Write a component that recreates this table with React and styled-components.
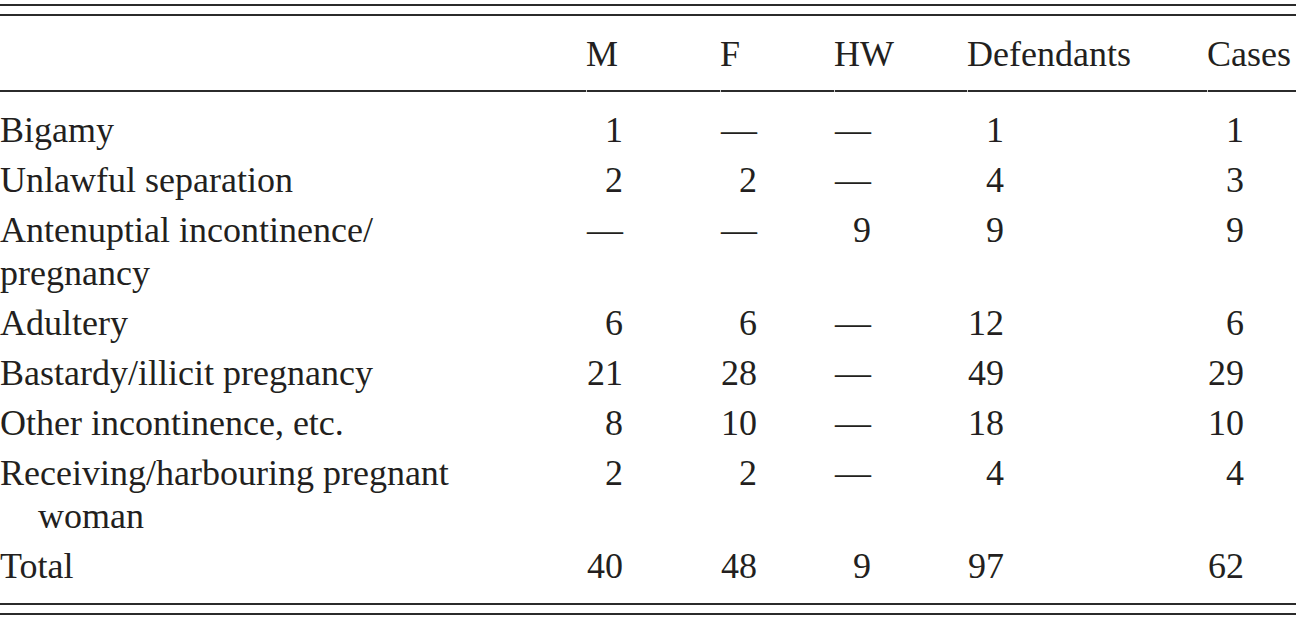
import styled, { createGlobalStyle } from 'styled-components';

const GlobalStyle = createGlobalStyle`
  html, body {
    margin: 0;
    padding: 0;
    background: #fff;
  }
  body {
    font-family: 'Liberation Serif', 'Times New Roman', serif;
    color: #231f20;
  }
`;

// column starts: label 0, M 586, F 720, HW 834, Defendants 967, Cases 1207
const COLS = '586px 134px 114px 133px 240px 89px';
const RULE = '#2b2b2b';

const Table = styled.div`
  width: 1296px;
  padding-top: 4px;
  font-size: 36px;
  line-height: 43px;
`;

const DoubleRule = styled.div`
  height: 8px;
  border-top: 2px solid ${RULE};
  border-bottom: 2px solid ${RULE};
`;

const HeaderRow = styled.div`
  display: grid;
  grid-template-columns: ${COLS};
`;

const HeadCell = styled.div`
  position: relative;
  padding: 17px 0 14px;
  border-bottom: 2px solid ${RULE};
  white-space: nowrap;

  &::after {
    content: '';
    display: ${({ $gap }) => ($gap ? 'block' : 'none')};
    position: absolute;
    left: 0;
    bottom: -2px;
    width: 1px;
    height: 2px;
    background: #cfcfcf;
  }
`;

const Body = styled.div`
  padding: 13px 0 12px;
`;

const Row = styled.div`
  display: grid;
  grid-template-columns: ${COLS};
  padding: 4px 0 3px;
`;

const Label = styled.div`
  white-space: nowrap;
`;

const LabelLine = styled.div`
  padding-left: ${({ $indent }) => ($indent ? '38px' : '0')};
`;

const Num = styled.div`
  width: 37px;
  text-align: right;
  white-space: nowrap;
`;

const headers = ['M', 'F', 'HW', 'Defendants', 'Cases'];

const rows = [
  { label: ['Bigamy'], values: ['1', '—', '—', '1', '1'] },
  { label: ['Unlawful separation'], values: ['2', '2', '—', '4', '3'] },
  { label: ['Antenuptial incontinence/', 'pregnancy'], values: ['—', '—', '9', '9', '9'] },
  { label: ['Adultery'], values: ['6', '6', '—', '12', '6'] },
  { label: ['Bastardy/illicit pregnancy'], values: ['21', '28', '—', '49', '29'] },
  { label: ['Other incontinence, etc.'], values: ['8', '10', '—', '18', '10'] },
  { label: ['Receiving/harbouring pregnant', 'woman'], indent: true, values: ['2', '2', '—', '4', '4'] },
  { label: ['Total'], values: ['40', '48', '9', '97', '62'] },
];

const App = () => (
  <>
    <GlobalStyle />
    <Table>
      <DoubleRule />
      <HeaderRow>
        <HeadCell />
        {headers.map((h) => (
          <HeadCell key={h} $gap>
            {h}
          </HeadCell>
        ))}
      </HeaderRow>
      <Body>
        {rows.map((row) => (
          <Row key={row.label[0]}>
            <Label>
              {row.label.map((line, i) => (
                <LabelLine key={line} $indent={row.indent && i > 0}>
                  {line}
                </LabelLine>
              ))}
            </Label>
            {row.values.map((v, i) => (
              <Num key={i}>{v}</Num>
            ))}
          </Row>
        ))}
      </Body>
      <DoubleRule />
    </Table>
  </>
);

export default App;
